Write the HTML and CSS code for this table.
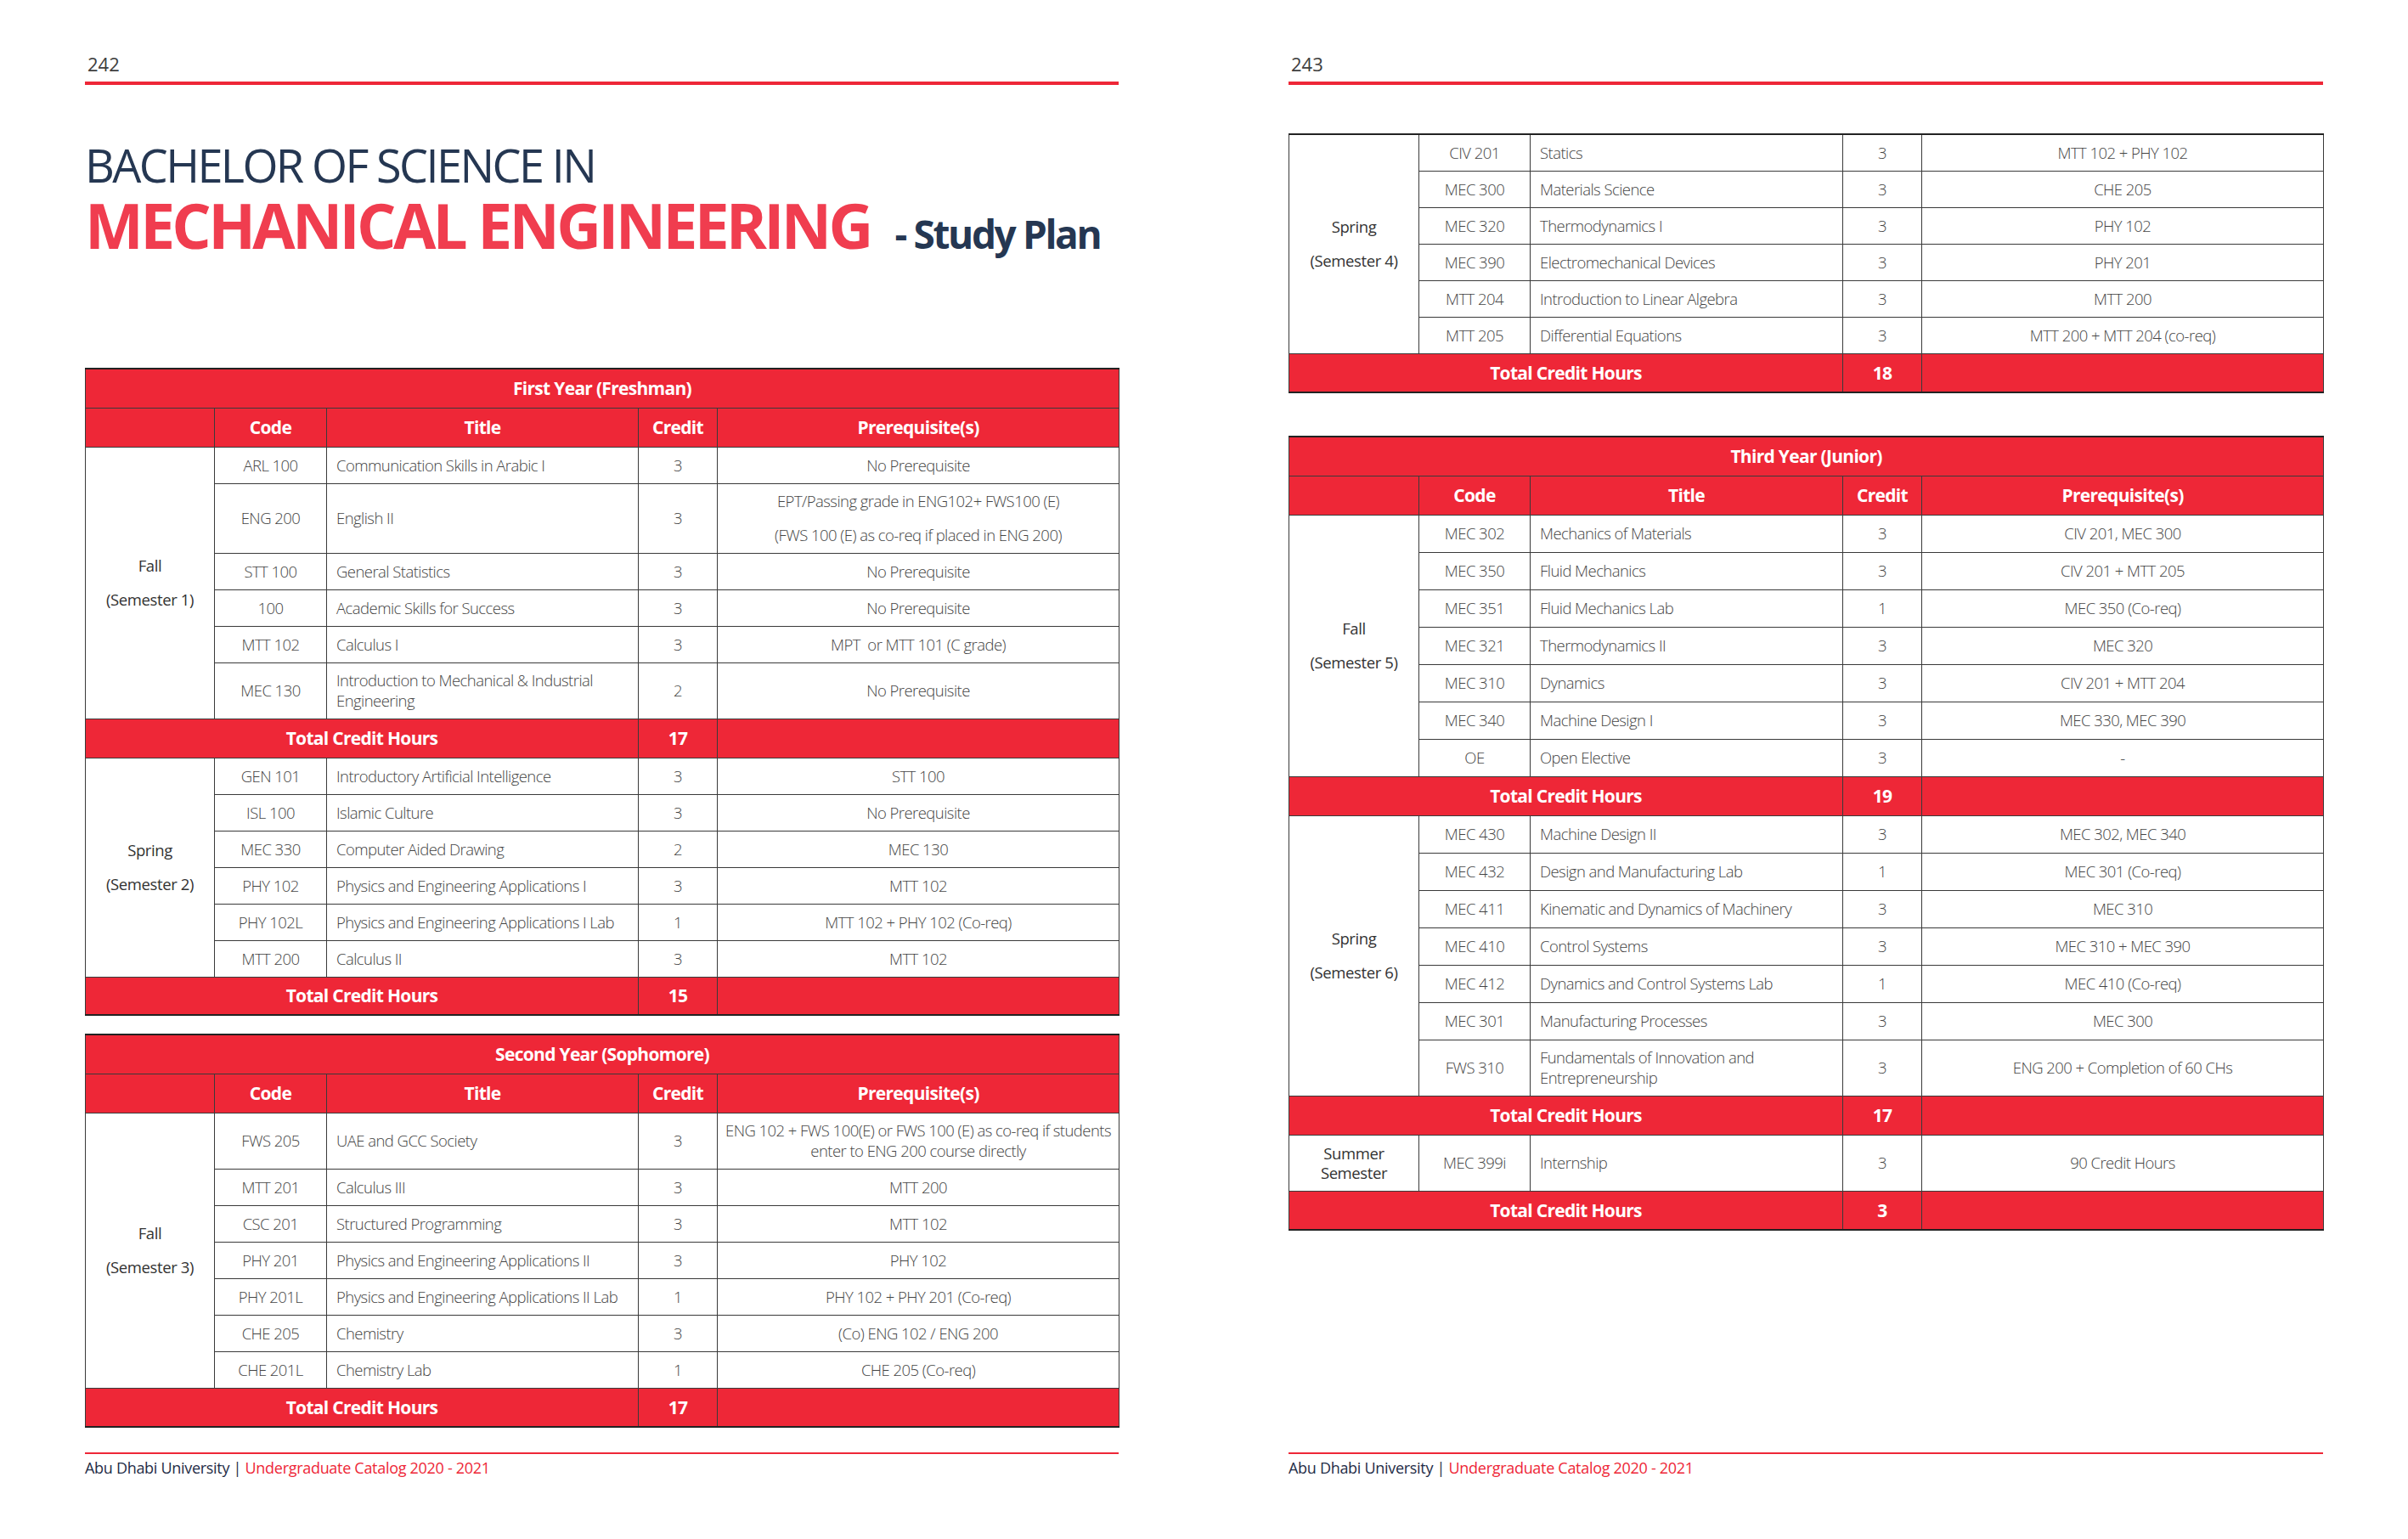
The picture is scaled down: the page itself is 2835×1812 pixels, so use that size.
FILE: index.html
```html
<!DOCTYPE html>
<html lang="en">
<head>
<meta charset="utf-8">
<title>Mechanical Engineering - Study Plan</title>
<link rel="stylesheet" href="styles.css">
</head>
<body>
<div class="spread">
  <section class="page">
    <header class="page-head">
      <div class="page-num">242</div>
      <div class="rule"></div>
    </header>
    <div class="title">
      <h1 class="title-1">BACHELOR OF SCIENCE IN</h1>
      <h2 class="title-2">MECHANICAL ENGINEERING<span class="title-3">- Study Plan</span></h2>
    </div>
    <table class="plan left">
      <colgroup><col class="c-sem"><col class="c-code"><col class="c-title"><col class="c-credit"><col class="c-pre"></colgroup>
      <tr class="r-cap"><th colspan="5">First Year (Freshman)</th></tr>
      <tr class="r-head"><th></th><th>Code</th><th>Title</th><th>Credit</th><th>Prerequisite(s)</th></tr>
      <tr><td class="sem wide" rowspan="6"><span>Fall</span><span>(Semester 1)</span></td><td class="code">ARL 100</td><td class="ttl">Communication Skills in Arabic I</td><td class="cr">3</td><td class="pre">No Prerequisite</td></tr>
      <tr class="r-82"><td class="code">ENG 200</td><td class="ttl">English II</td><td class="cr">3</td><td class="pre wide">EPT/Passing grade in ENG102+ FWS100 (E)<br>(FWS 100 (E) as co-req if placed in ENG 200)</td></tr>
      <tr><td class="code">STT 100</td><td class="ttl">General Statistics</td><td class="cr">3</td><td class="pre">No Prerequisite</td></tr>
      <tr><td class="code">100</td><td class="ttl">Academic Skills for Success</td><td class="cr">3</td><td class="pre">No Prerequisite</td></tr>
      <tr><td class="code">MTT 102</td><td class="ttl">Calculus I</td><td class="cr">3</td><td class="pre">MPT&nbsp; or MTT 101 (C grade)</td></tr>
      <tr class="r-66"><td class="code">MEC 130</td><td class="ttl">Introduction to Mechanical &amp; Industrial<br>Engineering</td><td class="cr">2</td><td class="pre">No Prerequisite</td></tr>
      <tr class="r-total"><td colspan="3">Total Credit Hours</td><td>17</td><td></td></tr>
      <tr><td class="sem wide" rowspan="6"><span>Spring</span><span>(Semester 2)</span></td><td class="code">GEN 101</td><td class="ttl">Introductory Artificial Intelligence</td><td class="cr">3</td><td class="pre">STT 100</td></tr>
      <tr><td class="code">ISL 100</td><td class="ttl">Islamic Culture</td><td class="cr">3</td><td class="pre">No Prerequisite</td></tr>
      <tr><td class="code">MEC 330</td><td class="ttl">Computer Aided Drawing</td><td class="cr">2</td><td class="pre">MEC 130</td></tr>
      <tr><td class="code">PHY 102</td><td class="ttl">Physics and Engineering Applications I</td><td class="cr">3</td><td class="pre">MTT 102</td></tr>
      <tr><td class="code">PHY 102L</td><td class="ttl">Physics and Engineering Applications I Lab</td><td class="cr">1</td><td class="pre">MTT 102 + PHY 102 (Co-req)</td></tr>
      <tr><td class="code">MTT 200</td><td class="ttl">Calculus II</td><td class="cr">3</td><td class="pre">MTT 102</td></tr>
      <tr class="r-total r-45"><td colspan="3">Total Credit Hours</td><td>15</td><td></td></tr>
    </table>
    <table class="plan left second">
      <colgroup><col class="c-sem"><col class="c-code"><col class="c-title"><col class="c-credit"><col class="c-pre"></colgroup>
      <tr class="r-cap"><th colspan="5">Second Year (Sophomore)</th></tr>
      <tr class="r-head"><th></th><th>Code</th><th>Title</th><th>Credit</th><th>Prerequisite(s)</th></tr>
      <tr class="r-66"><td class="sem wide" rowspan="7"><span>Fall</span><span>(Semester 3)</span></td><td class="code">FWS 205</td><td class="ttl">UAE and GCC Society</td><td class="cr">3</td><td class="pre">ENG 102 + FWS 100(E) or FWS 100 (E) as co-req if students<br>enter to ENG 200 course directly</td></tr>
      <tr><td class="code">MTT 201</td><td class="ttl">Calculus III</td><td class="cr">3</td><td class="pre">MTT 200</td></tr>
      <tr><td class="code">CSC 201</td><td class="ttl">Structured Programming</td><td class="cr">3</td><td class="pre">MTT 102</td></tr>
      <tr><td class="code">PHY 201</td><td class="ttl">Physics and Engineering Applications II</td><td class="cr">3</td><td class="pre">PHY 102</td></tr>
      <tr><td class="code">PHY 201L</td><td class="ttl">Physics and Engineering Applications II Lab</td><td class="cr">1</td><td class="pre">PHY 102 + PHY 201 (Co-req)</td></tr>
      <tr><td class="code">CHE 205</td><td class="ttl">Chemistry</td><td class="cr">3</td><td class="pre">(Co) ENG 102 / ENG 200</td></tr>
      <tr><td class="code">CHE 201L</td><td class="ttl">Chemistry Lab</td><td class="cr">1</td><td class="pre">CHE 205 (Co-req)</td></tr>
      <tr class="r-total"><td colspan="3">Total Credit Hours</td><td>17</td><td></td></tr>
    </table>
    <footer class="foot">
      <div class="foot-rule"></div>
      <p class="foot-text"><span class="navy">Abu Dhabi University</span> <span class="navy">|</span> <span class="red">Undergraduate Catalog 2020 - 2021</span></p>
    </footer>
  </section>

  <section class="page">
    <header class="page-head">
      <div class="page-num">243</div>
      <div class="rule"></div>
    </header>
    <table class="plan right top">
      <colgroup><col class="c-sem"><col class="c-code"><col class="c-title"><col class="c-credit"><col class="c-pre"></colgroup>
      <tr><td class="sem wide" rowspan="6"><span>Spring</span><span>(Semester 4)</span></td><td class="code">CIV 201</td><td class="ttl">Statics</td><td class="cr">3</td><td class="pre">MTT 102 + PHY 102</td></tr>
      <tr><td class="code">MEC 300</td><td class="ttl">Materials Science</td><td class="cr">3</td><td class="pre">CHE 205</td></tr>
      <tr><td class="code">MEC 320</td><td class="ttl">Thermodynamics I</td><td class="cr">3</td><td class="pre">PHY 102</td></tr>
      <tr><td class="code">MEC 390</td><td class="ttl">Electromechanical Devices</td><td class="cr">3</td><td class="pre">PHY 201</td></tr>
      <tr><td class="code">MTT 204</td><td class="ttl">Introduction to Linear Algebra</td><td class="cr">3</td><td class="pre">MTT 200</td></tr>
      <tr><td class="code">MTT 205</td><td class="ttl">Differential Equations</td><td class="cr">3</td><td class="pre">MTT 200 + MTT 204 (co-req)</td></tr>
      <tr class="r-total"><td colspan="3">Total Credit Hours</td><td>18</td><td></td></tr>
    </table>
    <table class="plan right third">
      <colgroup><col class="c-sem"><col class="c-code"><col class="c-title"><col class="c-credit"><col class="c-pre"></colgroup>
      <tr class="r-cap"><th colspan="5">Third Year (Junior)</th></tr>
      <tr class="r-head"><th></th><th>Code</th><th>Title</th><th>Credit</th><th>Prerequisite(s)</th></tr>
      <tr><td class="sem wide" rowspan="7"><span>Fall</span><span>(Semester 5)</span></td><td class="code">MEC 302</td><td class="ttl">Mechanics of Materials</td><td class="cr">3</td><td class="pre">CIV 201, MEC 300</td></tr>
      <tr><td class="code">MEC 350</td><td class="ttl">Fluid Mechanics</td><td class="cr">3</td><td class="pre">CIV 201 + MTT 205</td></tr>
      <tr><td class="code">MEC 351</td><td class="ttl">Fluid Mechanics Lab</td><td class="cr">1</td><td class="pre">MEC 350 (Co-req)</td></tr>
      <tr><td class="code">MEC 321</td><td class="ttl">Thermodynamics II</td><td class="cr">3</td><td class="pre">MEC 320</td></tr>
      <tr><td class="code">MEC 310</td><td class="ttl">Dynamics</td><td class="cr">3</td><td class="pre">CIV 201 + MTT 204</td></tr>
      <tr><td class="code">MEC 340</td><td class="ttl">Machine Design I</td><td class="cr">3</td><td class="pre">MEC 330, MEC 390</td></tr>
      <tr><td class="code">OE</td><td class="ttl">Open Elective</td><td class="cr">3</td><td class="pre">-</td></tr>
      <tr class="r-total"><td colspan="3">Total Credit Hours</td><td>19</td><td></td></tr>
      <tr><td class="sem wide" rowspan="7"><span>Spring</span><span>(Semester 6)</span></td><td class="code">MEC 430</td><td class="ttl">Machine Design II</td><td class="cr">3</td><td class="pre">MEC 302, MEC 340</td></tr>
      <tr><td class="code">MEC 432</td><td class="ttl">Design and Manufacturing Lab</td><td class="cr">1</td><td class="pre">MEC 301 (Co-req)</td></tr>
      <tr><td class="code">MEC 411</td><td class="ttl">Kinematic and Dynamics of Machinery</td><td class="cr">3</td><td class="pre">MEC 310</td></tr>
      <tr><td class="code">MEC 410</td><td class="ttl">Control Systems</td><td class="cr">3</td><td class="pre">MEC 310 + MEC 390</td></tr>
      <tr><td class="code">MEC 412</td><td class="ttl">Dynamics and Control Systems Lab</td><td class="cr">1</td><td class="pre">MEC 410 (Co-req)</td></tr>
      <tr><td class="code">MEC 301</td><td class="ttl">Manufacturing Processes</td><td class="cr">3</td><td class="pre">MEC 300</td></tr>
      <tr class="r-66"><td class="code">FWS 310</td><td class="ttl">Fundamentals of Innovation and<br>Entrepreneurship</td><td class="cr">3</td><td class="pre">ENG 200 + Completion of 60 CHs</td></tr>
      <tr class="r-total"><td colspan="3">Total Credit Hours</td><td>17</td><td></td></tr>
      <tr class="r-66"><td class="sem">Summer<br>Semester</td><td class="code">MEC 399i</td><td class="ttl">Internship</td><td class="cr">3</td><td class="pre">90 Credit Hours</td></tr>
      <tr class="r-total"><td colspan="3">Total Credit Hours</td><td>3</td><td></td></tr>
    </table>
    <footer class="foot">
      <div class="foot-rule"></div>
      <p class="foot-text"><span class="navy">Abu Dhabi University</span> <span class="navy">|</span> <span class="red">Undergraduate Catalog 2020 - 2021</span></p>
    </footer>
  </section>
</div>
</body>
</html>
```

FILE: styles.css
```css
* { box-sizing: border-box; }
html, body { margin: 0; padding: 0; background: #ffffff; }
body {
  font-family: "Open Sans", "Noto Sans", sans-serif;
  color: #444444;
}
.spread {
  display: grid;
  grid-template-columns: 1217px 1218px;
  column-gap: 200px;
  padding: 0 100px;
}
.page {
  display: flex;
  flex-direction: column;
  height: 1740px;
}
.page-head { padding-top: 63px; }
.page-num {
  font-size: 22px;
  line-height: 24px;
  color: #404040;
  padding-left: 3px;
}
.rule {
  height: 4px;
  background: #ee2737;
  margin-top: 9px;
}
.title { margin: 67px 0 0 0; }
.title-1 {
  margin: 0;
  font-size: 54px;
  line-height: 55px;
  font-weight: 400;
  letter-spacing: -2.6px;
  color: #253752;
  white-space: nowrap;
}
.title-2 {
  margin: 6px 0 0 0;
  font-size: 73px;
  line-height: 74px;
  font-weight: 700;
  letter-spacing: -3.7px;
  color: #f03d4f;
  white-space: nowrap;
}
.title-3 {
  font-size: 46px;
  line-height: 46px;
  letter-spacing: -2.4px;
  color: #253752;
  margin-left: 29px;
}
.plan {
  width: 100%;
  table-layout: fixed;
  border-collapse: collapse;
  border-top: 2px solid #222;
  border-bottom: 2px solid #222;
}
.plan.left { margin-top: 131px; }
.plan.left.second { margin-top: 21px; }
.plan.right.top { margin-top: 57px; }
.plan.right.third { margin-top: 50px; }
.left .c-sem { width: 152px; }
.left .c-code { width: 132px; }
.left .c-title { width: 367px; }
.left .c-credit { width: 93px; }
.left .c-pre { width: 473px; }
.right .c-sem { width: 153px; }
.right .c-code { width: 131px; }
.right .c-title { width: 368px; }
.right .c-credit { width: 93px; }
.right .c-pre { width: 473px; }

.plan td, .plan th {
  border: 1px solid #3a3a3a;
  padding: 0;
  vertical-align: middle;
}
.plan tr { height: 43px; }
.plan.third tr { height: 44px; }
.plan tr.r-82 { height: 82px; }
.plan tr.r-66 { height: 66px; }
.plan tr.r-cap, .plan tr.r-head, .plan tr.r-total { height: 46px; }
.plan tr.r-total.r-45 { height: 45px; }

.r-cap th, .r-head th, .r-total td {
  background: #ee2737;
  color: #ffffff;
  font-weight: 700;
  font-size: 21px;
  letter-spacing: -0.7px;
  text-align: center;
}
.plan td {
  font-size: 18.5px;
  font-weight: 300;
  line-height: 24px;
  letter-spacing: -0.55px;
  color: #444444;
}
.plan td.code, .plan td.cr { text-align: center; }
.plan td.ttl { text-align: left; padding-left: 11px; }
.plan td.pre { text-align: center; padding: 0 4px; }
.plan td.pre.wide { line-height: 40px; }
.plan td.sem {
  text-align: center;
  font-weight: 400;
  color: #333333;
  line-height: 23px;
  letter-spacing: -0.4px;
}
.plan td.sem.wide span { display: block; line-height: 40px; }
.plan tr.r-total td {
  font-size: 21px;
  font-weight: 700;
  letter-spacing: -0.7px;
  color: #ffffff;
}

.foot { margin-top: auto; }
.foot-rule { height: 2px; background: #ee2737; }
.foot-text {
  margin: 4px 0 0 0;
  font-size: 18px;
  line-height: 24px;
  letter-spacing: -0.3px;
  white-space: nowrap;
}
.navy { color: #1f2d47; }
.red { color: #ee2737; }
```
